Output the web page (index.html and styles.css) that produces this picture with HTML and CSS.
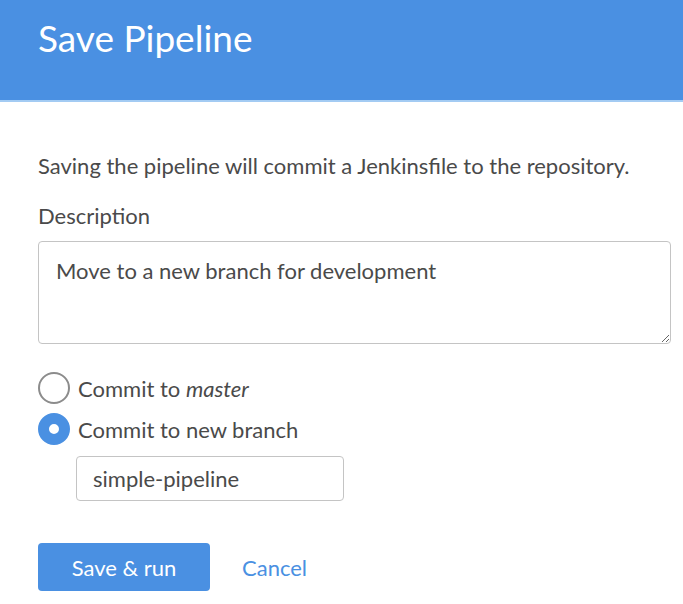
FILE: index.html
```html
<!DOCTYPE html>
<html>
<head>
<meta charset="utf-8">
<link rel="stylesheet" href="styles.css">
</head>
<body>
<div class="dialog">
  <header class="head">
    <h1 class="title">Save Pipeline</h1>
  </header>
  <div class="body">
    <p class="intro">Saving the pipeline will commit a Jenkinsfile to the repository.</p>
    <label class="field-label">Description</label>
    <textarea class="desc">Move to a new branch for development</textarea>
    <div class="radios">
      <label class="radio-row">
        <span class="radio"></span>
        <span class="radio-text">Commit to <em>master</em></span>
      </label>
      <label class="radio-row">
        <span class="radio checked"></span>
        <span class="radio-text">Commit to new branch</span>
      </label>
      <div class="branch-wrap">
        <input class="branch" type="text" value="simple-pipeline">
      </div>
    </div>
    <div class="actions">
      <button class="btn-primary">Save &amp; run</button>
      <a class="btn-link">Cancel</a>
    </div>
  </div>
</div>
</body>
</html>
```
FILE: styles.css
```css
* { box-sizing: border-box; }
html, body { margin: 0; padding: 0; background: #fff; }
body { font-family: Lato, "Open Sans", sans-serif; color: #4a4a4a; }
.dialog { width: 683px; }
.head {
  background: #4a90e2;
  height: 102px;
  border-bottom: 2px solid #a3cbf3;
  padding: 0 38px;
}
.title {
  margin: 0;
  padding-top: 16px;
  font-size: 37px;
  font-weight: 400;
  color: #fff;
  line-height: 44px;
}
.body { padding: 0 12px 0 38px; }
.intro {
  margin: 0;
  padding-top: 51px;
  font-size: 22px;
  line-height: 26px;
}
.field-label {
  display: block;
  margin-top: 24px;
  font-size: 22px;
  line-height: 26px;
}
.desc {
  display: block;
  margin-top: 12px;
  width: 633px;
  height: 103px;
  border: 1px solid #c4c4c4;
  border-radius: 4px;
  padding: 16px 17px;
  font-family: Lato, sans-serif;
  font-size: 22px;
  line-height: 26px;
  color: #4a4a4a;
  resize: vertical;
}
.radios { margin-top: 28px; display: flex; flex-direction: column; }
.radio-row {
  display: flex; align-items: center; gap: 8px;
  height: 32px; margin-bottom: 9px;
  font-size: 22px;
}
.radio-row + .radio-row { margin-bottom: 11px; }
.radio {
  width: 32px; height: 32px; border-radius: 50%;
  border: 2px solid #8c8c8c;
  background: #fff;
  flex: none;
}
.radio.checked {
  border: 11px solid #4a90e2;
  background: #fff;
}
.radio-text em { font-style: italic; }
.branch-wrap { padding-left: 38px; }
.branch {
  width: 268px; height: 45px;
  border: 1px solid #c4c4c4;
  border-radius: 4px;
  padding: 0 16px;
  font-family: Lato, sans-serif;
  font-size: 22px;
  color: #4a4a4a;
}
.actions { margin-top: 42px; display: flex; align-items: center; gap: 32px; }
.btn-primary {
  width: 172px; height: 48px;
  background: #4a90e2;
  border: none;
  border-radius: 4px;
  color: #fff;
  font-family: Lato, sans-serif;
  font-size: 22px;
}
.btn-link { color: #4a90e2; font-size: 22px; }
```
